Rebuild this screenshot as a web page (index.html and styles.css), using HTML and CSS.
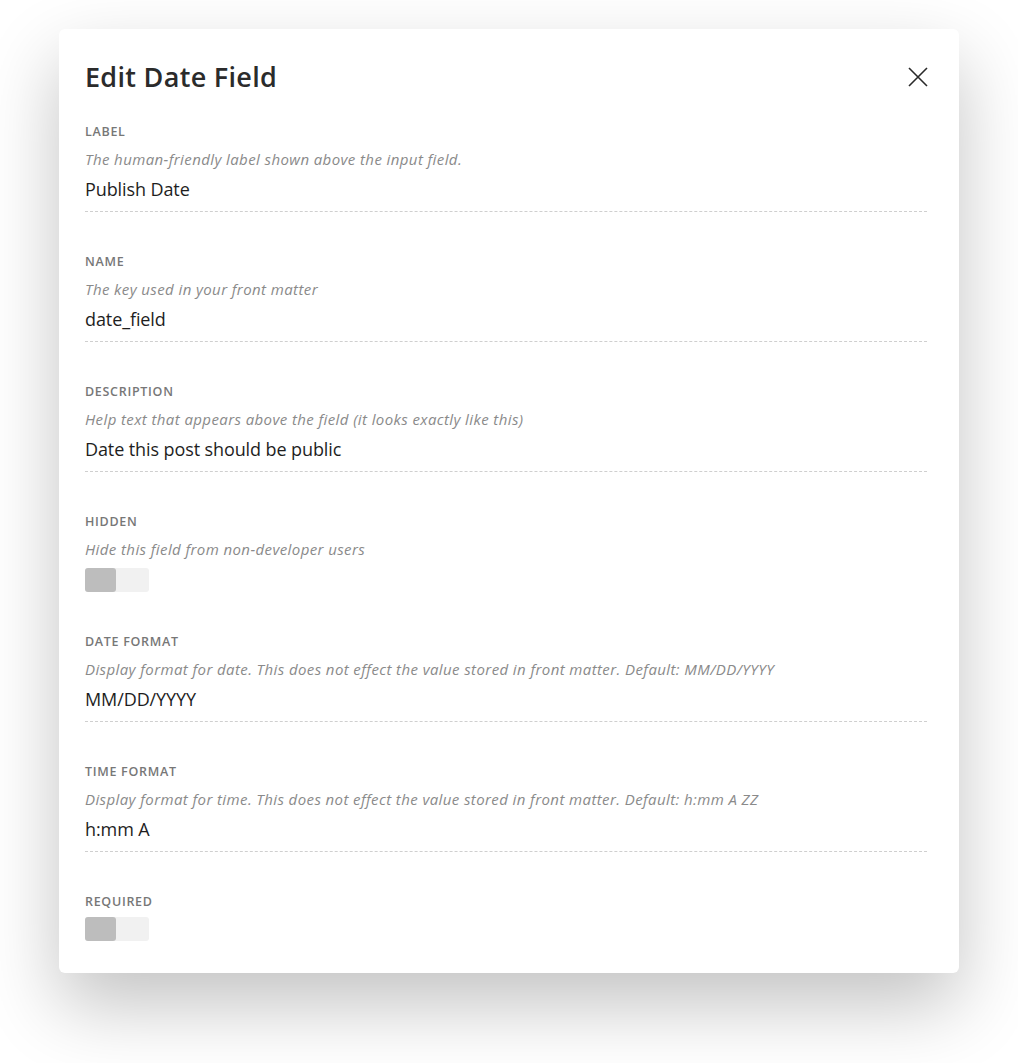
FILE: index.html
```html
<!DOCTYPE html>
<html lang="en">
<head>
<meta charset="utf-8">
<title>Edit Date Field</title>
<link rel="stylesheet" href="styles.css">
</head>
<body>
<div class="modal">
  <div class="modal-header">
    <h1 class="modal-title">Edit Date Field</h1>
    <button class="close-btn" aria-label="Close">
      <svg width="20" height="20" viewBox="0 0 20 20"><path d="M1 1 L19 19 M19 1 L1 19" stroke="#2a2a2a" stroke-width="1.6" fill="none"/></svg>
    </button>
  </div>

  <div class="field">
    <div class="field-label">Label</div>
    <div class="field-desc">The human-friendly label shown above the input field.</div>
    <div class="field-value">Publish Date</div>
  </div>

  <div class="field">
    <div class="field-label">Name</div>
    <div class="field-desc">The key used in your front matter</div>
    <div class="field-value">date_field</div>
  </div>

  <div class="field">
    <div class="field-label">Description</div>
    <div class="field-desc">Help text that appears above the field (it looks exactly like this)</div>
    <div class="field-value">Date this post should be public</div>
  </div>

  <div class="field field-toggle">
    <div class="field-label">Hidden</div>
    <div class="field-desc">Hide this field from non-developer users</div>
    <div class="toggle"><span class="knob"></span></div>
  </div>

  <div class="field">
    <div class="field-label">Date Format</div>
    <div class="field-desc">Display format for date. This does not effect the value stored in front matter. Default: MM/DD/YYYY</div>
    <div class="field-value">MM/DD/YYYY</div>
  </div>

  <div class="field">
    <div class="field-label">Time Format</div>
    <div class="field-desc">Display format for time. This does not effect the value stored in front matter. Default: h:mm A ZZ</div>
    <div class="field-value">h:mm A</div>
  </div>

  <div class="field field-toggle field-last">
    <div class="field-label">Required</div>
    <div class="toggle toggle-tight"><span class="knob"></span></div>
  </div>
</div>
</body>
</html>
```

FILE: styles.css
```css
html, body {
  margin: 0;
  padding: 0;
  background: #ffffff;
}
body {
  font-family: "Open Sans", "Noto Sans", sans-serif;
  color: #222;
  padding: 29px 0 90px 59px;
}
.modal {
  box-sizing: border-box;
  width: 900px;
  height: 944px;
  padding: 30px 32px 31px 26px;
  background: #fff;
  border-radius: 6px;
  box-shadow: 0 32px 75px rgba(0, 0, 0, 0.24);
}
.modal-header {
  display: flex;
  align-items: center;
  justify-content: space-between;
  margin-bottom: 27px;
}
.modal-title {
  margin: 0;
  font-size: 27px;
  line-height: 36px;
  font-weight: 600;
  letter-spacing: 0.3px;
  color: #2b2b2b;
}
.close-btn {
  display: flex;
  align-items: center;
  justify-content: center;
  padding: 0;
  margin: 0 -1px 0 0;
  border: 0;
  background: none;
  width: 20px;
  height: 20px;
  cursor: pointer;
}
.field {
  margin-bottom: 40px;
  padding-bottom: 7px;
  border-bottom: 1px dashed #cfcfcf;
}
.field-toggle {
  border-bottom: 0;
  padding-bottom: 0;
}
.field-last {
  margin-bottom: 0;
}
.field-label {
  font-size: 12.5px;
  line-height: 20px;
  font-weight: 600;
  letter-spacing: 0.7px;
  text-transform: uppercase;
  color: #777;
  margin-bottom: 5px;
}
.field-desc {
  font-size: 15px;
  line-height: 24px;
  font-style: italic;
  letter-spacing: 0.4px;
  color: #8a8a8a;
}
.field-value {
  margin-top: 3px;
  font-size: 18px;
  line-height: 30px;
  letter-spacing: -0.1px;
  color: #1e1e1e;
}
.toggle {
  display: flex;
  margin-top: 7px;
  width: 64px;
  height: 24px;
  background: #f1f1f1;
  border-radius: 3px;
}
.toggle-tight {
  margin-top: 1px;
}
.knob {
  width: 31px;
  height: 24px;
  background: #bdbdbd;
  border-radius: 3px;
}
```
